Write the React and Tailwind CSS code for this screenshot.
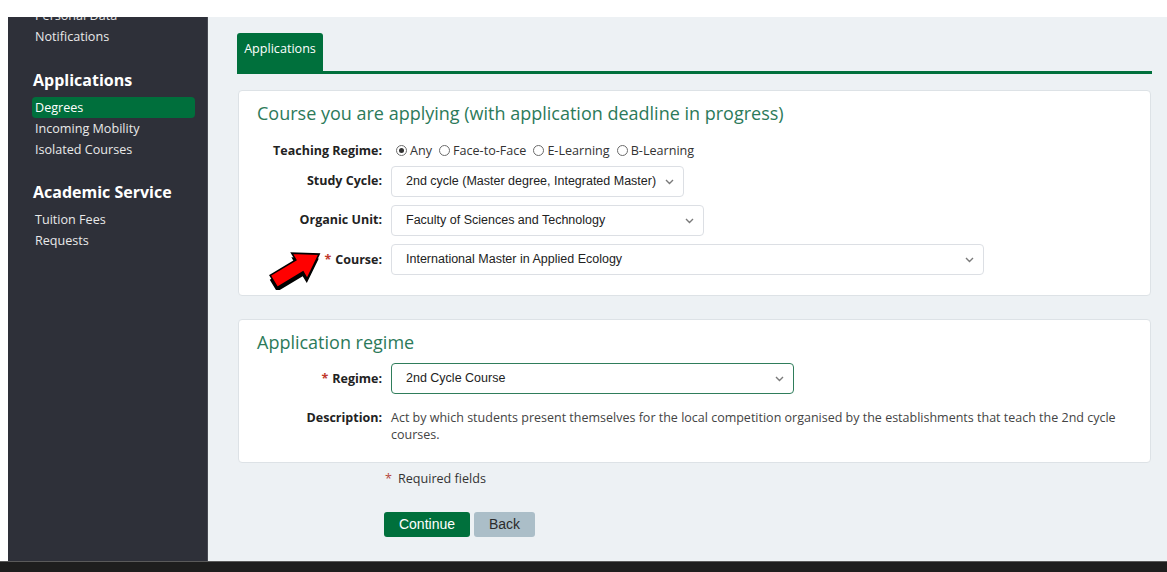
import { useState } from 'react'

const sideFont = { fontFamily: '"Open Sans", "Noto Sans", sans-serif' }

function Chevron() {
  return (
    <svg width="9" height="6" viewBox="0 0 9 6" className="shrink-0">
      <path d="M1 1l3.5 3.5L8 1" fill="none" stroke="#7a7a7a" strokeWidth="1.4" />
    </svg>
  )
}

function Select({ value, width, focus }) {
  return (
    <div
      className={`flex h-[31px] items-center justify-between whitespace-nowrap rounded-[4px] border bg-white pl-[14px] pr-[9px] text-[12.5px] text-[#222] font-['Liberation_Sans',Arial,sans-serif] ${
        focus ? 'border-[#2f7d5b]' : 'border-[#dcdfe4]'
      } ${width}`}
    >
      <span>{value}</span>
      <Chevron />
    </div>
  )
}

function Radio({ label, checked, onPick }) {
  return (
    <label className="flex cursor-pointer items-center gap-[3px]" onClick={onPick}>
      <span className="flex h-[11px] w-[11px] items-center justify-center rounded-full border border-[#6b6b6b] bg-white">
        {checked && <span className="h-[5px] w-[5px] rounded-full bg-[#333]" />}
      </span>
      <span>{label}</span>
    </label>
  )
}

function Req() {
  return <span className="mr-[4px] text-[#c0392b]">*</span>
}

function PointerArrow() {
  return (
    <svg width="60" height="44" viewBox="0 0 60 44" className="absolute left-[9px] top-[2px]">
      <g transform="rotate(-31 30 22)">
        {/* dark extrusion under the arrow */}
        <polygon points="4,15 34,15 34,7 57,22 34,37 34,29 4,29" transform="translate(-2.5 3.5)" fill="#000" />
        <polygon points="4,15 34,15 34,7 57,22 34,37 34,29 4,29" fill="#f00" stroke="#000" strokeWidth="1.6" strokeLinejoin="miter" />
      </g>
    </svg>
  )
}

const labelCls = 'text-right text-[12.5px] font-bold text-[#222]'

export default function App() {
  const [regime, setRegime] = useState('Any')

  return (
    <div className="flex h-[572px] w-[1167px] flex-col overflow-hidden bg-white" style={sideFont}>
      <div className="h-[17px] shrink-0 bg-white" />

      <div className="flex min-h-0 flex-1">
        <div className="w-[8px] shrink-0 bg-white" />

        {/* sidebar */}
        <aside className="w-[200px] shrink-0 overflow-hidden border-r border-[#474a52] bg-[#2e3039] pl-[24px] pr-[12px]">
          <ul className="mt-[-12px] text-[12.6px] leading-[21px] text-[#e9e9e9]">
            <li className="px-[3px]">Personal Data</li>
            <li className="px-[3px]">Notifications</li>
          </ul>

          <h3 className="mt-[21px] pl-[1px] text-[16px] font-bold leading-[24px] text-white">Applications</h3>
          <ul className="mt-[5px] text-[12.6px] leading-[21px] text-[#e9e9e9]">
            <li className="rounded-[4px] bg-[#006f3c] px-[3px] text-white">Degrees</li>
            <li className="px-[3px]">Incoming Mobility</li>
            <li className="px-[3px]">Isolated Courses</li>
          </ul>

          <h3 className="mt-[20px] pl-[1px] text-[16px] font-bold leading-[24px] text-white">Academic Service</h3>
          <ul className="mt-[5px] text-[12.6px] leading-[21px] text-[#e9e9e9]">
            <li className="px-[3px]">Tuition Fees</li>
            <li className="px-[3px]">Requests</li>
          </ul>
        </aside>

        {/* main content */}
        <main className="flex-1 bg-[#edf1f4] pl-[29px] pr-[15px] pt-[16px]">
          <div className="flex border-b-[3px] border-[#00703c]">
            <div className="flex h-[38px] w-[86px] items-center justify-center rounded-t-[3px] bg-[#00703c] pb-[5px] text-[12.6px] text-white">
              Applications
            </div>
          </div>

          <section className="mx-[1px] mt-[16px] rounded-[4px] border border-[#dde2e6] bg-white pb-[20px] pl-[18px] pr-[18px] pt-[9px]">
            <h2 className="text-[18px] leading-[26px] text-[#2c7a5a]">
              Course you are applying (with application deadline in progress)
            </h2>

            <div className="mt-[15px] grid grid-cols-[125px_1fr] items-center gap-x-[9px]">
              <div className={`${labelCls} leading-[19px]`}>Teaching Regime:</div>
              <div className="flex items-center gap-[7px] pl-[5px] text-[12.6px] leading-[19px] text-[#333]">
                {['Any', 'Face-to-Face', 'E-Learning', 'B-Learning'].map((r) => (
                  <Radio key={r} label={r} checked={regime === r} onPick={() => setRegime(r)} />
                ))}
              </div>

              <div className={`${labelCls} mt-[6px]`}>Study Cycle:</div>
              <div className="mt-[6px]">
                <Select value="2nd cycle (Master degree, Integrated Master)" width="w-[293px]" />
              </div>

              <div className={`${labelCls} mt-[8px]`}>Organic Unit:</div>
              <div className="mt-[8px]">
                <Select value="Faculty of Sciences and Technology" width="w-[313px]" />
              </div>

              <div className={`${labelCls} relative mt-[8px] h-[31px] leading-[31px]`}>
                <PointerArrow />
                <Req />
                Course:
              </div>
              <div className="mt-[8px]">
                <Select value="International Master in Applied Ecology" width="w-[593px]" />
              </div>
            </div>
          </section>

          <section className="mx-[1px] mt-[23px] rounded-[4px] border border-[#dde2e6] bg-white pb-[19px] pl-[18px] pr-[18px] pt-[9px]">
            <h2 className="text-[18px] leading-[26px] text-[#2c7a5a]">Application regime</h2>

            <div className="mt-[8px] grid grid-cols-[125px_1fr] items-start gap-x-[9px]">
              <div className={`${labelCls} leading-[31px]`}>
                <Req />
                Regime:
              </div>
              <Select value="2nd Cycle Course" width="w-[403px]" focus />

              <div className={`${labelCls} mt-[15px] leading-[17px]`}>Description:</div>
              <p className="mt-[15px] text-[12.5px] leading-[17px] text-[#444]">
                Act by which students present themselves for the local competition organised by the establishments that teach the 2nd cycle courses.
              </p>
            </div>
          </section>

          <div className="ml-[148px] mt-[7px] text-[12.6px] leading-[18px] text-[#333]">
            <span className="mr-[6px] text-[#b5483f]">*</span>
            Required fields
          </div>

          <div className="ml-[147px] mt-[24px] flex gap-[4px] font-['Liberation_Sans',Arial,sans-serif] text-[14px]">
            <button className="h-[25px] w-[86px] rounded-[3px] bg-[#00703c] text-white">Continue</button>
            <button className="h-[25px] w-[61px] rounded-[3px] bg-[#abbec8] text-[#2b2b2b]">Back</button>
          </div>
        </main>
      </div>

      <div className="h-[11px] shrink-0 border-t border-[#5a5a5a] bg-[#1e1e1e]" />
    </div>
  )
}
